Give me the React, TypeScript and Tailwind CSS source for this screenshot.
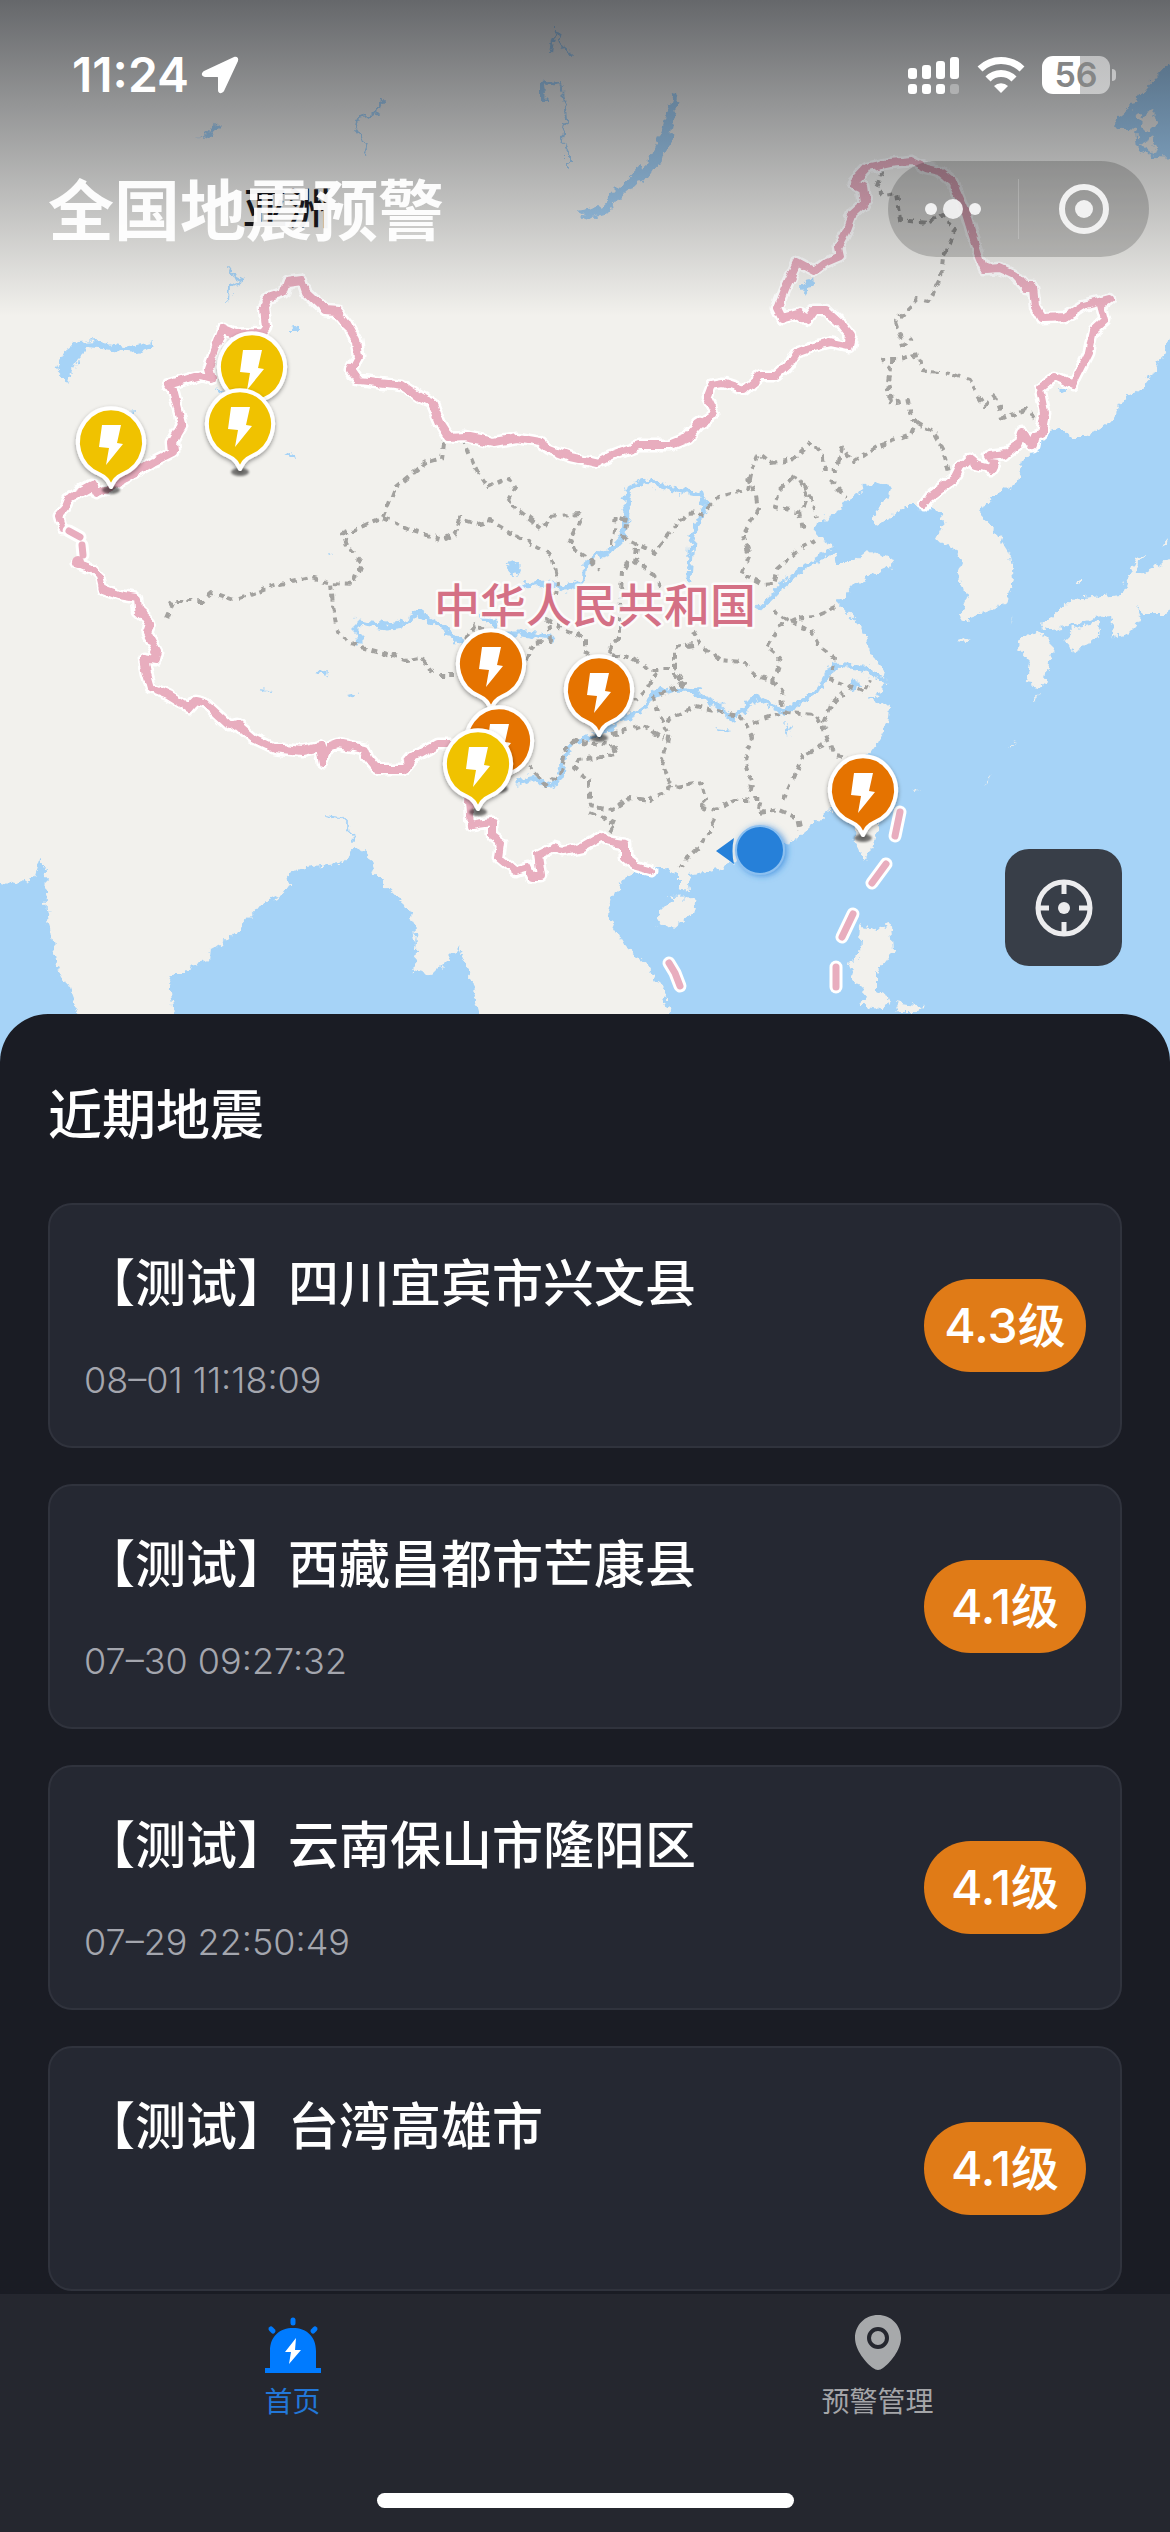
type Quake = {
    place: string;
    time: string;
    level: string;
};

const quakes: Quake[] = [
    { place: "【测试】四川宜宾市兴文县", time: "08–01 11:18:09", level: "4.3级" },
    { place: "【测试】西藏昌都市芒康县", time: "07–30 09:27:32", level: "4.1级" },
    { place: "【测试】云南保山市隆阳区", time: "07–29 22:50:49", level: "4.1级" },
    { place: "【测试】台湾高雄市", time: "", level: "4.1级" },
];

const YELLOW = "#f0c200";
const ORANGE = "#e57300";

// drawn in order, later pins cover earlier ones
const pins = [
    { x: 252, y: 368, color: YELLOW },
    { x: 240, y: 425, color: YELLOW },
    { x: 111, y: 443, color: YELLOW },
    { x: 491, y: 665, color: ORANGE },
    { x: 599, y: 691, color: ORANGE },
    { x: 499, y: 742, color: ORANGE },
    { x: 478, y: 765, color: YELLOW },
    { x: 863, y: 791, color: ORANGE },
];

const seas = [
    // pacific side
    "1170,337 1159,363 1144,385 1121,403 1110,422 1087,437 1071,437 1060,427 1050,430 1039,443 1022,462 1018,480 1002,493 985,503 979,514 995,531 1010,555 1013,579 1008,600 991,610 964,620 960,614 966,600 958,572 962,562 955,548 947,546 935,540 943,524 941,514 934,508 918,507 903,507 892,517 876,526 873,517 880,507 888,497 890,487 876,482 865,485 857,495 846,503 838,511 817,521 815,538 834,545 838,562 853,562 867,550 895,560 893,565 872,574 853,586 838,603 861,627 872,655 886,676 884,691 868,698 890,707 888,724 878,741 868,755 853,775 838,803 821,817 802,834 788,844 761,851 735,863 704,872 687,875 689,891 679,889 679,874 662,868 643,868 627,877 612,899 608,917 624,944 650,968 664,992 669,1014 675,1070 1180,1070 1180,337",
    // sea of okhotsk
    "1180,55 1170,62 1144,90 1130,108 1112,122 1117,128 1136,130 1138,150 1152,157 1180,158",
    // arabian sea
    "-10,879 13,885 34,877 40,858 46,872 45,896 55,961 69,989 78,1014 85,1070 -10,1070",
    // bay of bengal
    "176,1070 174,1014 170,982 174,973 188,973 191,965 209,960 210,951 239,929 260,906 281,896 289,884 287,874 306,867 344,862 356,848 367,851 375,875 402,901 415,924 417,944 413,970 432,975 445,962 459,948 469,972 475,996 480,1014 490,1070",
];

const islands = [
    "1180,553 1170,559 1144,573 1136,571 1137,563 1146,556 1136,558 1127,579 1121,595 1094,598 1071,600 1052,617 1039,626 1048,630 1064,627 1079,621 1106,615 1113,621 1112,633 1121,639 1133,627 1140,617 1136,608 1144,614 1165,614 1180,605",
    "1098,622 1101,631 1092,641 1071,653 1064,639 1075,627",
    "1039,631 1056,648 1048,665 1045,686 1027,683 1031,662 1018,648 1022,639",
    "853,810 876,803 878,827 872,848 865,860 855,844",
    "660,910 671,899 696,898 692,913 673,930 658,924",
    "861,925 876,929 891,925 893,951 876,972 876,992 890,999 884,1010 861,1006 867,996 855,982 849,965 859,955",
    "894,1001 908,1003 926,1005 918,1012 900,1012",
    "957,642 970,637 966,644",
    "1010,624 1013,615 1011,620",
    "984,784 993,774 988,781",
    "1008,748 1016,741 1012,746",
    "1032,704 1040,694 1037,703",
    "1136,118 1152,112 1158,122 1150,132",
    "1142,142 1150,138 1158,150 1150,154",
    "911,790 918,788 914,791",
    "1078,582 1080,580 1080,584",
    "1160,545 1170,538 1166,546",
];

const lakes = [
    "673,95 679,97 673,127 669,148 654,173 624,193 608,213 591,218 576,212 599,208 616,190 647,160 660,133",
    "57,370 63,353 77,342 100,341 130,347 153,341 153,348 138,352 88,348 78,358 71,372 68,383",
    "576,212 590,210 600,206 600,216 580,217",
    "198,139 216,124 223,123 216,130",
    "540,82 556,80 562,84 548,86 542,94 548,100 540,100",
    "290,328 298,325 296,332 290,332",
    "284,455 294,452 296,458",
    "505,564 516,562 522,572 514,574",
    "801,290 812,276 813,284 804,295",
    "1058,388 1068,388 1062,395",
    "316,673 328,670 326,676",
    "345,695 358,692 350,698",
    "126,412 140,411 132,416",
    "214,385 224,390 222,394",
    "259,689 270,690 264,692",
    "850,682 858,680 860,688 852,690",
    "784,722 792,726 788,736",
    "716,728 732,730 722,732",
    "326,553 334,554 328,556",
];

const rivers = [
    "358,641 358,622 387,626 402,624 419,613 440,626 461,643",
    "482,619 494,621 496,633 524,633 551,638",
    "522,586 547,584 566,588 584,581 586,564 600,555 608,553 622,538 627,514 625,503 629,488 647,481 671,488 702,495 706,507 700,517 692,541 689,579",
    "758,610 765,603 779,588 807,565 834,550",
    "517,782 536,777 545,786 559,781 563,758 574,741 600,734 620,720 643,710 654,693 685,688 704,696 735,719 756,696 784,713 815,693 834,665 861,667 884,679",
];

const streams = [
    "382,100 380,110 368,117 356,120 355,128 362,138 366,148 364,154",
    "556,30 552,40 550,54",
    "556,30 562,46 572,54",
    "562,82 564,98 566,120 562,140 568,150 568,168",
    "228,268 232,274 244,280 230,287 229,300",
    "326,816 340,818 350,828 352,840",
];

const border =
    "924,505 930,497 955,478 960,468 969,459 976,465 991,469 994,463 989,456 1006,454 1020,443 1023,432 1033,446 1035,435 1041,433 1045,413 1040,388 1055,377 1073,385 1089,353 1094,330 1105,320 1101,305 1110,299 1083,306 1066,317 1041,318 1035,307 1033,287 1025,287 1014,275 999,268 985,269 980,257 972,233 964,207 953,182 939,171 926,168 912,161 890,163 867,168 853,183 863,188 865,202 853,213 846,232 838,247 840,256 826,262 814,271 797,262 784,290 777,308 782,318 800,313 807,320 814,310 826,310 840,323 851,337 849,346 830,342 807,348 796,352 788,365 777,375 761,375 744,390 723,383 712,385 707,398 715,414 698,425 687,438 670,445 639,445 612,455 597,463 570,457 547,448 540,442 517,438 494,442 465,436 449,437 440,423 432,403 421,398 402,385 387,383 358,380 351,370 358,357 356,340 346,322 337,311 325,310 306,292 302,280 287,282 283,293 268,298 264,307 266,328 262,333 237,334 223,328 209,367 212,378 201,375 168,385 174,393 182,425 172,442 173,452 153,462 126,478 111,488 96,493 92,485 69,498 65,508 59,515 63,529";

const borderSouth =
    "77,563 92,569 100,577 103,589 119,595 137,598 138,610 151,622 147,634 157,652 155,660 144,658 147,674 151,688 168,695 189,708 195,701 205,703 230,726 237,724 253,738 274,748 302,751 320,747 323,763 329,747 337,744 364,749 367,757 377,769 404,769 413,758 438,744 452,744 471,775 469,803 471,825 492,822 492,836 501,843 499,858 515,871 528,867 532,876 542,876 539,855 553,848 563,851 582,847 601,836 606,841 625,844 625,858 635,866 650,870";

const borderDashes = [
    "69,531 80,537",
    "82,545 83,555",
    "900,812 895,836",
    "886,864 872,883",
    "853,914 842,937",
    "836,967 836,987",
    "669,963 675,973 680,986",
];

const provinces = [
    "444,442 442,458 425,463 394,488 383,517 343,534 348,548 362,564 354,584 331,583",
    "166,619 174,601 203,601 212,593 233,600 276,584 310,577 331,583 333,607 337,631 346,643 383,653 406,660 421,657 434,674 455,674",
    "383,519 413,531 444,540 455,534 461,519 478,524 490,521 520,538 551,555 557,583 555,596",
    "463,438 475,468 488,487 509,478 515,487 507,502 522,513 542,529 551,517 578,514 580,522 568,545 589,559 599,569",
    "467,640 474,625 486,630",
    "526,660 535,642 550,640 548,620 566,631 585,638 585,652 600,658",
    "612,545 616,517 627,520 624,538 639,545 654,552 664,541 685,515 702,514 719,497 748,490 752,470 759,453 771,463 792,460 811,442 823,457 824,470 836,470 842,448 853,462 876,447 911,435 916,423 911,413 909,400 891,403 888,383 890,367 882,360 899,360 918,355 922,370 949,373 968,380 985,405 995,397 1002,418 1025,410 1039,422",
    "916,423 934,433 943,450 949,472",
    "882,170 876,188 884,195 897,193 901,220 926,223 943,215 955,230 943,257 941,277 928,302 918,300 895,322 903,345 912,338",
    "792,478 779,490 775,507 800,512 807,493 800,482 792,478",
    "800,512 803,531",
    "805,485 812,500 817,517",
    "830,480 847,497",
    "748,477 756,497 758,510 742,533 750,555 742,574 761,584 773,583 777,569 796,552 815,540",
    "637,548 635,562 652,574 660,586",
    "627,562 622,572 620,614 620,634 608,652 631,658 650,669 668,669 683,683",
    "692,631 700,645 719,660 742,662 758,676 773,681 780,658 767,648 779,627 796,619 815,617 838,607",
    "773,610 790,622 811,629 821,648 834,658 830,679 865,693 872,678",
    "773,681 782,693 786,713 815,715 823,727 834,755 846,757",
    "823,722 830,706 844,693",
    "692,645 675,648 675,669 685,683 654,698 658,713 669,734 662,765 673,786 702,782 706,800 700,806 715,810 735,800 761,800 758,813 780,810 798,818 801,832",
    "666,720 696,707 723,713 742,717 752,738 744,758 752,782 748,798",
    "754,722 769,717 784,713",
    "824,746 803,755 796,772 782,803",
    "673,786 650,800 631,798 612,810 589,806 589,782 574,769 578,760 616,755 612,745 581,741",
    "612,734 643,726 664,738",
    "589,813 616,824 606,837",
    "715,820 700,848 681,865",
    "656,672 646,690 635,700",
    "530,765 545,785 560,775 566,750 578,738",
];

function Pin({ x, y, color }: { x: number; y: number; color: string }) {
    return (
        <g transform={`translate(${x} ${y})`}>
            <ellipse cx="0" cy="47" rx="9" ry="4" fill="#000" opacity="0.5" filter="url(#soft)" />
            <path
                d="M0 44 C-3 38 -5 34 -12 31 A33 34 0 1 1 12 31 C5 34 3 38 0 44 Z"
                fill={color}
                stroke="#fff"
                strokeWidth="4"
                strokeLinejoin="round"
                filter="url(#pinShadow)"
            />
            <path d="M-9 -18 H10 L6 0 L12 1 L-5 22 L-2 5 L-12 4 Z" fill="#fff" />
        </g>
    );
}

function QuakeMap() {
    return (
        <svg
            viewBox="0 0 1170 1062"
            preserveAspectRatio="xMidYMin slice"
            className="block h-[1062px] w-full bg-[#f2f1ed]"
            role="img"
            aria-label="地震分布地图"
        >
            <defs>
                <filter id="rough" x="0" y="0" width="1170" height="1062" filterUnits="userSpaceOnUse" colorInterpolationFilters="sRGB">
                    <feTurbulence type="fractalNoise" baseFrequency="0.12" numOctaves="3" seed="4" />
                    <feDisplacementMap in="SourceGraphic" scale="12" xChannelSelector="R" yChannelSelector="G" />
                </filter>
                <filter id="wavy" x="0" y="0" width="1170" height="1062" filterUnits="userSpaceOnUse" colorInterpolationFilters="sRGB">
                    <feTurbulence type="fractalNoise" baseFrequency="0.08" numOctaves="2" seed="4" />
                    <feDisplacementMap in="SourceGraphic" scale="8" xChannelSelector="R" yChannelSelector="G" />
                </filter>
                <filter id="soft" x="-30%" y="-50%" width="160%" height="200%">
                    <feGaussianBlur stdDeviation="1" />
                </filter>
                <filter id="pinShadow" x="-30%" y="-30%" width="160%" height="160%">
                    <feDropShadow dx="0" dy="2" stdDeviation="2" floodColor="#000" floodOpacity="0.4" />
                </filter>
                <filter id="dotGlow" x="-50%" y="-50%" width="200%" height="200%">
                    <feDropShadow dx="2" dy="1" stdDeviation="3" floodColor="#2580d9" floodOpacity="0.7" />
                </filter>
            </defs>

            <g filter="url(#rough)">
                <rect width="1170" height="1062" fill="#f2f1ed" />
                {seas.map((p) => <polygon key={p} points={p} fill="#a6d3f7" />)}
                {islands.map((p) => <polygon key={p} points={p} fill="#f2f1ed" />)}
                {lakes.map((p) => <polygon key={p} points={p} fill="#a6d3f7" />)}
                <g fill="none" stroke="#a6d3f7" strokeLinejoin="round" strokeLinecap="round">
                    {rivers.map((p) => <polyline key={p} points={p} strokeWidth="5" />)}
                    {streams.map((p) => <polyline key={p} points={p} strokeWidth="2" />)}
                </g>
            </g>

            <g fill="none" stroke="#a3a29f" strokeWidth="4" strokeDasharray="6 5" strokeLinejoin="round" filter="url(#wavy)">
                {provinces.map((p) => <polyline key={p} points={p} />)}
            </g>

            <g fill="none" strokeLinejoin="round" strokeLinecap="round" filter="url(#wavy)">
                {[border, borderSouth].map((p) => <polyline key={p} points={p} stroke="#fff" strokeWidth="13" />)}
                {[border, borderSouth].map((p) => <polyline key={p} points={p} stroke="#e8adbe" strokeWidth="8" />)}
            </g>
            <g fill="none" strokeLinejoin="round" strokeLinecap="round">
                {borderDashes.map((p) => <polyline key={p} points={p} stroke="#fff" strokeWidth="13" />)}
                {borderDashes.map((p) => <polyline key={p} points={p} stroke="#e8adbe" strokeWidth="7" />)}
            </g>
            <circle cx="78" cy="562" r="6" fill="#e8adbe" />

            <g fontFamily="'Noto Sans CJK SC', sans-serif" paintOrder="stroke" strokeLinejoin="round">
                <text x="243" y="225" fontSize="44" fontWeight="500" fill="#18181b">亚洲</text>
                <text x="434" y="622" fontSize="46" fontWeight="500" fill="#d47085" stroke="#fff" strokeOpacity="0.8" strokeWidth="5">
                    中华人民共和国
                </text>
            </g>

            {pins.map((pin) => <Pin key={`${pin.x}-${pin.y}`} {...pin} />)}

            {/* current position */}
            <path d="M716 851 L734 838 Q731 851 734 864 Z" fill="#2580d9" />
            <circle cx="760" cy="850" r="24" fill="#2580d9" stroke="#8cc0f0" strokeWidth="2" filter="url(#dotGlow)" />
        </svg>
    );
}

function StatusBar() {
    return (
        <div className="flex h-[150px] items-center justify-between pr-[54px] pl-[72px] text-white">
            <div className="flex items-center gap-3">
                <span className="text-[48px] leading-none font-semibold">11:24</span>
                <svg width="38" height="38" viewBox="0 0 38 38" fill="currentColor" aria-hidden="true">
                    <path d="M33 1 L3 15 C0 17 0 20 4 21 H16 C17 21 17 21 17 22 V34 C17 38 21 38 23 35 L37 5 C38 2 36 0 33 1 Z" />
                </svg>
            </div>
            <div className="flex items-center gap-4">
                <svg width="52" height="38" viewBox="0 0 52 38" fill="currentColor" aria-hidden="true">
                    <rect x="0" y="12" width="9" height="11" rx="3" />
                    <rect x="14" y="9" width="9" height="14" rx="3" />
                    <rect x="28" y="5" width="9" height="18" rx="3" />
                    <rect x="42" y="1" width="9" height="22" rx="3" />
                    <rect x="0" y="28" width="9" height="10" rx="3" />
                    <rect x="14" y="28" width="9" height="10" rx="3" />
                    <rect x="28" y="28" width="9" height="10" rx="3" />
                    <rect x="42" y="28" width="9" height="10" rx="3" opacity="0.3" />
                </svg>
                <svg width="50" height="38" viewBox="0 0 50 38" aria-hidden="true">
                    <g fill="none" stroke="currentColor" strokeWidth="7">
                        <path d="M4 13 A30 30 0 0 1 46 13" />
                        <path d="M12 23 A18 18 0 0 1 38 23" />
                    </g>
                    <path d="M18 30 A10 10 0 0 1 32 30 L25 37 Z" fill="currentColor" />
                </svg>
                <div className="flex items-center gap-[2px]">
                    <div className="flex h-[38px] w-[68px] items-center justify-center rounded-[11px] bg-linear-to-r from-white from-56% to-white/50 to-56%">
                        <span className="text-[34px] leading-none font-semibold text-[#858686]">56</span>
                    </div>
                    <div className="h-3 w-1 rounded-r-full bg-white/50" />
                </div>
            </div>
        </div>
    );
}

function Header() {
    return (
        <header className="absolute inset-x-0 top-0 h-[316px] bg-linear-to-b from-[#080c14]/60 to-transparent">
            <StatusBar />
            <div className="flex items-center justify-between pt-[9px] pr-[21px] pl-12">
                <h1 className="pt-1 text-[66px] leading-[96px] font-bold text-white/95">全国地震预警</h1>
                <div className="flex h-24 w-[261px] items-center rounded-full bg-black/18 text-[#f1f1f1]">
                    <button type="button" aria-label="更多" className="flex flex-1 justify-center">
                        <svg width="58" height="24" viewBox="0 0 58 24" fill="currentColor">
                            <circle cx="7" cy="12" r="6" />
                            <circle cx="29" cy="12" r="10" opacity="0.95" />
                            <circle cx="51" cy="12" r="6" />
                        </svg>
                    </button>
                    <div className="h-[60px] w-px bg-white/20" />
                    <button type="button" aria-label="关闭" className="flex flex-1 justify-center">
                        <svg width="52" height="52" viewBox="0 0 52 52">
                            <circle cx="26" cy="26" r="22" fill="none" stroke="currentColor" strokeWidth="6" />
                            <circle cx="26" cy="26" r="9" fill="currentColor" />
                        </svg>
                    </button>
                </div>
            </div>
        </header>
    );
}

function QuakeCard({ quake }: { quake: Quake }) {
    return (
        <li className="flex h-[245px] items-center justify-between rounded-3xl border-2 border-[#30333d] bg-[#252832] px-[34px]">
            <div className="flex flex-col gap-9">
                <h3 className="text-[51px] leading-[72px] font-medium text-white">{quake.place}</h3>
                <p className="h-12 text-[36px] leading-[48px] font-light text-[#a4a6ae]">{quake.time}</p>
            </div>
            <span className="flex h-[93px] w-[162px] shrink-0 items-center justify-center rounded-full bg-[#e07b17] text-[48px] leading-none font-medium text-white">
                {quake.level}
            </span>
        </li>
    );
}

function TabBar() {
    return (
        <nav className="sticky bottom-0 mt-auto flex h-[238px] flex-col justify-between bg-[#25272f] pb-6">
            <div className="grid grid-cols-2 pt-5 text-[28px] leading-10">
                <a href="#home" aria-current="page" className="flex flex-col items-center gap-2 text-[#2277d8]">
                    <svg width="56" height="60" viewBox="0 0 56 60" aria-hidden="true">
                        <g stroke="#007bff" strokeWidth="5" strokeLinecap="round">
                            <path d="M28 6 V9" />
                            <path d="M6 15 L8 17" />
                            <path d="M50 15 L48 17" />
                        </g>
                        <path d="M5 54 V37 C5 22 15 14 28 14 C41 14 51 22 51 37 V54 H56 V59 H0 V54 Z" fill="#007bff" />
                        <path d="M31 24 L20 38 H26 L24 50 L36 36 H30 Z" fill="#fff" />
                    </svg>
                    首页
                </a>
                <a href="#manage" className="flex flex-col items-center gap-2 text-[#a4a5a8]">
                    <svg width="56" height="60" viewBox="0 0 56 60" aria-hidden="true">
                        <path d="M28 1 C41 1 51 11 51 24 C51 36 40 49 33 54 Q28 58 23 54 C16 49 5 36 5 24 C5 11 15 1 28 1 Z" fill="#a7a9ab" />
                        <circle cx="28" cy="24" r="9" fill="none" stroke="#25272f" strokeWidth="4" />
                    </svg>
                    预警管理
                </a>
            </div>
            <div className="mx-auto h-[15px] w-[417px] rounded-full bg-white" />
        </nav>
    );
}

export default function App() {
    return (
        <div className="flex min-h-screen flex-col bg-[#1a1c24] font-['Inter','Noto_Sans_CJK_SC',sans-serif]">
            <section className="relative">
                <QuakeMap />
                <Header />
                <button
                    type="button"
                    aria-label="定位"
                    className="absolute right-12 bottom-24 flex size-[117px] items-center justify-center rounded-3xl bg-[#383e48]"
                >
                    <svg width="58" height="58" viewBox="0 0 58 58" fill="none" stroke="#ececee" strokeWidth="5">
                        <circle cx="29" cy="29" r="26" />
                        <path d="M29 3 V15 M29 43 V55 M3 29 H14 M44 29 H55" />
                        <circle cx="29" cy="29" r="6" fill="#ececee" stroke="none" />
                    </svg>
                </button>
            </section>

            <main className="relative -mt-12 rounded-t-[48px] bg-[#1a1c24] px-12 pt-[62px] pb-[3px]">
                <h2 className="text-[54px] leading-[80px] font-medium text-white">近期地震</h2>
                <ul className="mt-[47px] flex flex-col gap-9">
                    {quakes.map((quake) => (
                        <QuakeCard key={quake.place} quake={quake} />
                    ))}
                </ul>
            </main>

            <TabBar />
        </div>
    );
}
